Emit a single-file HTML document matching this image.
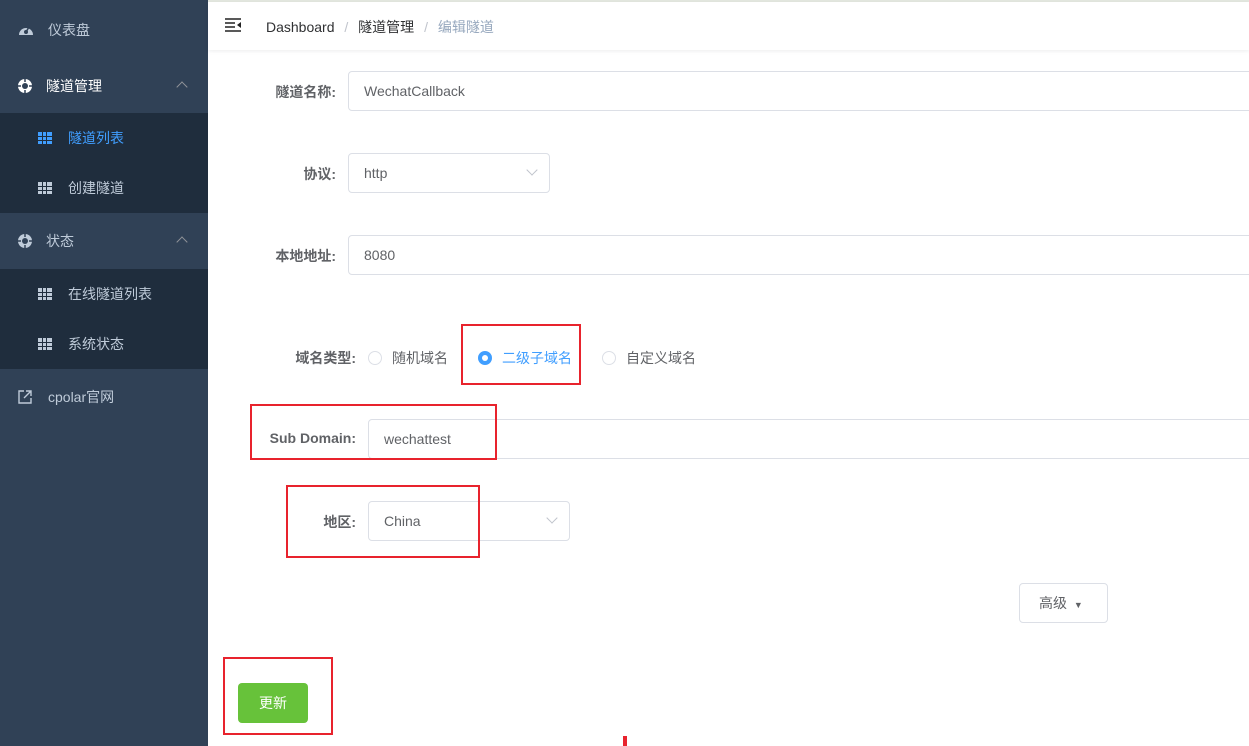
<!DOCTYPE html>
<html><head><meta charset="utf-8"><style>
*{margin:0;padding:0;box-sizing:border-box}
body{width:1249px;height:746px;overflow:hidden;background:#fff;font-family:"Liberation Sans","Noto Sans CJK SC",sans-serif;font-size:14px;position:relative}
.a{position:absolute}
#sb{left:0;top:0;width:208px;height:746px;background:#304156}
.it{position:absolute;left:0;width:208px;height:56px;color:#bfcbd9;font-size:14px;line-height:56px}
.sub{background:#1f2d3d;height:50px;line-height:50px}
.grid{position:absolute;left:38px;width:14px;height:12px;background:#bfcbd9;top:19px}
.grid:before,.grid:after{content:"";position:absolute;background:#1f2d3d}
.grid:before{left:4px;top:0;width:1px;height:12px;box-shadow:4px 0 0 #1f2d3d}
.grid:after{left:0;top:4px;width:14px;height:1px;box-shadow:0 4px 0 #1f2d3d}
.lbl{position:absolute;color:#606266;font-weight:bold;font-size:14px;text-align:right;width:150px}
.inp{position:absolute;border:1px solid #dcdfe6;border-radius:4px;height:40px;line-height:38px;padding-left:15px;color:#606266;font-size:14px;background:#fff}
.rb{position:absolute;width:14px;height:14px;border:1px solid #dcdfe6;border-radius:50%}
.red{position:absolute;border:2px solid #e8232d}
.chev{position:absolute;width:8px;height:8px;border-right:1px solid #c0c4cc;border-bottom:1px solid #c0c4cc;transform:rotate(45deg)}
</style></head><body>
<div class="a" style="left:0;top:0;width:1249px;height:2px;background:#e4e8e0"></div>
<div id="sb" class="a">
 <div class="it" style="top:2px"><svg class="a" style="left:18px;top:20px" width="16" height="14" viewBox="0 0 16 14"><path d="M1 13A7 7 0 1 1 15 13Z" fill="#bfcbd9"/><circle cx="8" cy="10" r="2" fill="#304156"/><path d="M8 10L11 5" stroke="#304156" stroke-width="1.5"/></svg><span class="a" style="left:48px">仪表盘</span></div>
 <div class="it" style="top:58px;color:#fff"><svg class="a" style="left:17px;top:20px" width="16" height="16" viewBox="0 0 16 16"><circle cx="8" cy="8" r="7" fill="#fff"/><circle cx="8" cy="8" r="3" fill="#304156"/><path d="M8 1v3M8 12v3M1 8h3M12 8h3" stroke="#304156" stroke-width="1.5"/></svg><span class="a" style="left:46px">隧道管理</span><span class="chev" style="left:178px;top:25px;transform:rotate(-135deg);border-color:#909399"></span></div>
 <div class="it sub" style="top:113px;color:#409eff"><div class="grid" style="background:#409eff"></div><span class="a" style="left:68px">隧道列表</span></div>
 <div class="it sub" style="top:163px"><div class="grid"></div><span class="a" style="left:68px">创建隧道</span></div>
 <div class="it" style="top:213px"><svg class="a" style="left:17px;top:20px" width="16" height="16" viewBox="0 0 16 16"><circle cx="8" cy="8" r="7" fill="#bfcbd9"/><circle cx="8" cy="8" r="3" fill="#304156"/><path d="M8 1v3M8 12v3M1 8h3M12 8h3" stroke="#304156" stroke-width="1.5"/></svg><span class="a" style="left:46px">状态</span><span class="chev" style="left:178px;top:25px;transform:rotate(-135deg);border-color:#909399"></span></div>
 <div class="it sub" style="top:269px"><div class="grid"></div><span class="a" style="left:68px">在线隧道列表</span></div>
 <div class="it sub" style="top:319px"><div class="grid"></div><span class="a" style="left:68px">系统状态</span></div>
 <div class="it" style="top:369px"><svg class="a" style="left:18px;top:21px" width="14" height="14" viewBox="0 0 14 14"><path d="M6 1H1V13H13V8M8 1H13V6M13 1L6 8" stroke="#bfcbd9" stroke-width="1.4" fill="none"/></svg><span class="a" style="left:48px">cpolar官网</span></div>
</div>
<div class="a" style="left:208px;top:2px;width:1041px;height:48px;background:#fff;box-shadow:0 1px 4px rgba(0,21,41,.08)"></div>
<svg class="a" style="left:225px;top:18px" width="17" height="14" viewBox="0 0 17 14"><path d="M0 1H16M0 5H10M0 9H10M0 13H16" stroke="#222" stroke-width="1.6"/><path d="M16 4L12 7L16 10Z" fill="#222"/></svg>
<div class="a" style="left:266px;top:17px;font-size:14px;color:#303133">Dashboard <span style="color:#c0c4cc;margin:0 6px">/</span> 隧道管理 <span style="color:#c0c4cc;margin:0 6px">/</span> <span style="color:#97a8be">编辑隧道</span></div>

<div class="lbl" style="left:186px;top:82px">隧道名称:</div>
<div class="inp" style="left:348px;top:71px;width:910px">WechatCallback</div>
<div class="lbl" style="left:186px;top:164px">协议:</div>
<div class="inp" style="left:348px;top:153px;width:202px">http</div><span class="chev" style="left:528px;top:166px"></span>
<div class="lbl" style="left:186px;top:246px">本地地址:</div>
<div class="inp" style="left:348px;top:235px;width:910px">8080</div>

<div class="lbl" style="left:206px;top:348px">域名类型:</div>
<div class="rb" style="left:368px;top:351px"></div><span class="a" style="left:392px;top:348px;color:#606266">随机域名</span>
<div class="rb" style="left:478px;top:351px;background:#409eff;border-color:#409eff"><div class="a" style="left:3px;top:3px;width:6px;height:6px;border-radius:50%;background:#fff"></div></div><span class="a" style="left:502px;top:348px;color:#409eff">二级子域名</span>
<div class="rb" style="left:602px;top:351px"></div><span class="a" style="left:626px;top:348px;color:#606266">自定义域名</span>
<div class="red" style="left:461px;top:324px;width:120px;height:61px"></div>

<div class="lbl" style="left:206px;top:430px">Sub Domain:</div>
<div class="inp" style="left:368px;top:419px;width:890px">wechattest</div>
<div class="red" style="left:250px;top:404px;width:247px;height:56px"></div>

<div class="lbl" style="left:206px;top:512px">地区:</div>
<div class="inp" style="left:368px;top:501px;width:202px">China</div><span class="chev" style="left:548px;top:514px"></span>
<div class="red" style="left:286px;top:485px;width:194px;height:73px"></div>

<div class="inp" style="left:1019px;top:583px;width:89px;padding-left:19px;color:#606266">高级 <span style="font-size:9px;margin-left:3px">▼</span></div>

<div class="a" style="left:238px;top:683px;width:70px;height:40px;background:#67c23a;border-radius:4px;color:#fff;text-align:center;line-height:40px;font-size:14px">更新</div>
<div class="red" style="left:223px;top:657px;width:110px;height:78px"></div>
<div class="a" style="left:623px;top:736px;width:4px;height:10px;background:#e8232d"></div>
</body></html>
